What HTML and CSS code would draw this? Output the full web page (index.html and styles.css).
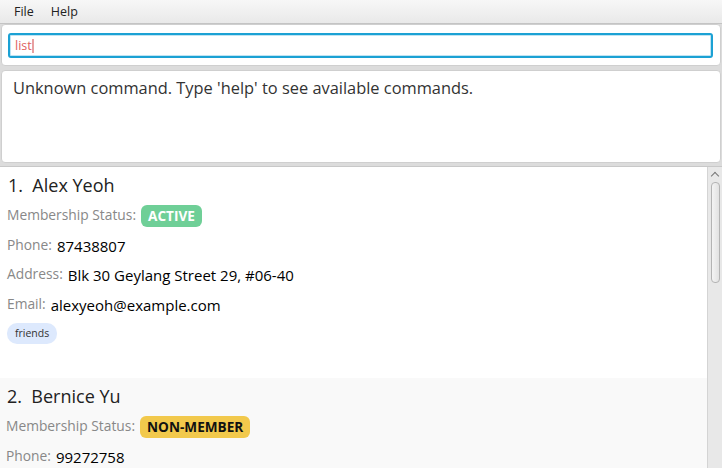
FILE: index.html
```html
<!DOCTYPE html>
<html>
<head>
<meta charset="utf-8">
<link rel="stylesheet" href="styles.css">
</head>
<body>
<div class="app">
  <div class="menubar">
    <span class="menu-item">File</span>
    <span class="menu-item">Help</span>
  </div>
  <div class="panel command-panel">
    <div class="command-input"><span class="cmd-text">list</span><span class="caret"></span></div>
  </div>
  <div class="panel result-panel">
    <div class="result-text">Unknown command. Type 'help' to see available commands.</div>
  </div>
  <div class="list-panel">
    <div class="list">
      <div class="card">
        <div class="name">1.&nbsp; Alex Yeoh</div>
        <div class="row"><span class="label">Membership Status:</span><span class="badge active">ACTIVE</span></div>
        <div class="row"><span class="label">Phone:</span><span class="value">87438807</span></div>
        <div class="row"><span class="label">Address:</span><span class="value">Blk 30 Geylang Street 29, #06-40</span></div>
        <div class="row"><span class="label">Email:</span><span class="value">alexyeoh@example.com</span></div>
        <div class="tags"><span class="tag">friends</span></div>
      </div>
      <div class="card alt">
        <div class="name">2.&nbsp; Bernice Yu</div>
        <div class="row"><span class="label">Membership Status:</span><span class="badge nonmember">NON-MEMBER</span></div>
        <div class="row"><span class="label">Phone:</span><span class="value">99272758</span></div>
      </div>
    </div>
    <div class="scrollbar">
      <div class="arrow"></div>
      <div class="thumb"></div>
    </div>
  </div>
</div>
</body>
</html>
```
FILE: styles.css
```css
* { box-sizing: border-box; }
html, body { margin: 0; padding: 0; }
body {
  width: 722px;
  height: 468px;
  overflow: hidden;
  background: #dcdcdc;
  font-family: "Open Sans", "Noto Sans", sans-serif;
}
.app {
  display: flex;
  flex-direction: column;
  height: 468px;
}
.menubar {
  height: 24px;
  flex: none;
  background: linear-gradient(#f7f7f7, #e9e9e9);
  border-bottom: 1px solid #c4c4c4;
  display: flex;
  align-items: center;
  padding-left: 14px;
  gap: 17px;
  font-size: 12.5px;
  color: #222;
}
.panel {
  flex: none;
  background: #fff;
  border: 1px solid #cfcfcf;
  border-radius: 4px;
  margin: 0 1px;
}
.command-panel {
  height: 42px;
  padding: 8px 7px 0 6px;
}
.command-input {
  height: 25px;
  border: 2px solid #1ba1d4;
  border-radius: 3px;
  box-shadow: inset 0 0 0 1px #bfe4f3;
  display: flex;
  align-items: center;
  padding-left: 5px;
  font-size: 12.5px;
  color: #e06060;
}
.caret {
  width: 2px;
  height: 14px;
  background: #e8a0a0;
}
.result-panel {
  height: 93px;
  margin-top: 4px;
  padding: 5px 11px;
}
.result-text {
  font-size: 16.4px;
  color: #333;
}
.list-panel {
  flex: 1;
  margin-top: 3px;
  background: #fff;
  border-top: 1px solid #c8c8c8;
  display: flex;
  min-height: 0;
}
.list {
  flex: 1;
  overflow: hidden;
}
.card {
  height: 211px;
  padding: 5px 7px 0 7px;
  background: #fff;
}
.card.alt { background: #f9f9f9; padding-left: 6px; }
.name {
  font-size: 18px;
  color: #222;
  height: 30px;
  line-height: 26px;
  padding-left: 1px;
}
.row {
  display: flex;
  align-items: flex-start;
  height: 29.5px;
  gap: 5px;
}
.label {
  font-size: 13.8px;
  color: #888;
  line-height: 20px;
  margin-top: 3px;
}
.value {
  font-size: 15px;
  color: #000;
  line-height: 20px;
  margin-top: 4px;
}
.badge {
  font-size: 13.6px;
  font-weight: 700;
  border-radius: 6px;
  padding: 0 7px;
  height: 22px;
  line-height: 22px;
  margin-top: 3px;
}
.badge.active { background: #6fcf97; color: #fff; }
.badge.nonmember { background: #f2c94c; color: #111; }
.tags { display: flex; padding-top: 3px; }
.tag {
  background: #dde9fd;
  color: #333;
  font-size: 10.5px;
  border-radius: 10px;
  height: 21px;
  line-height: 21px;
  padding: 0 8px;
}
.scrollbar {
  width: 15px;
  background: #e8e8e8;
  border-left: 1px solid #d4d4d4;
  display: flex;
  flex-direction: column;
  align-items: center;
  padding-top: 4px;
}
.arrow {
  width: 6px;
  height: 6px;
  border-left: 1.5px solid #777;
  border-top: 1.5px solid #777;
  transform: rotate(45deg);
  margin-top: 2px;
}
.thumb {
  width: 9px;
  height: 101px;
  margin-top: 3px;
  border: 1px solid #b4b4b4;
  border-radius: 4px;
  background: linear-gradient(90deg, #f4f4f4, #e2e2e2);
}
```
